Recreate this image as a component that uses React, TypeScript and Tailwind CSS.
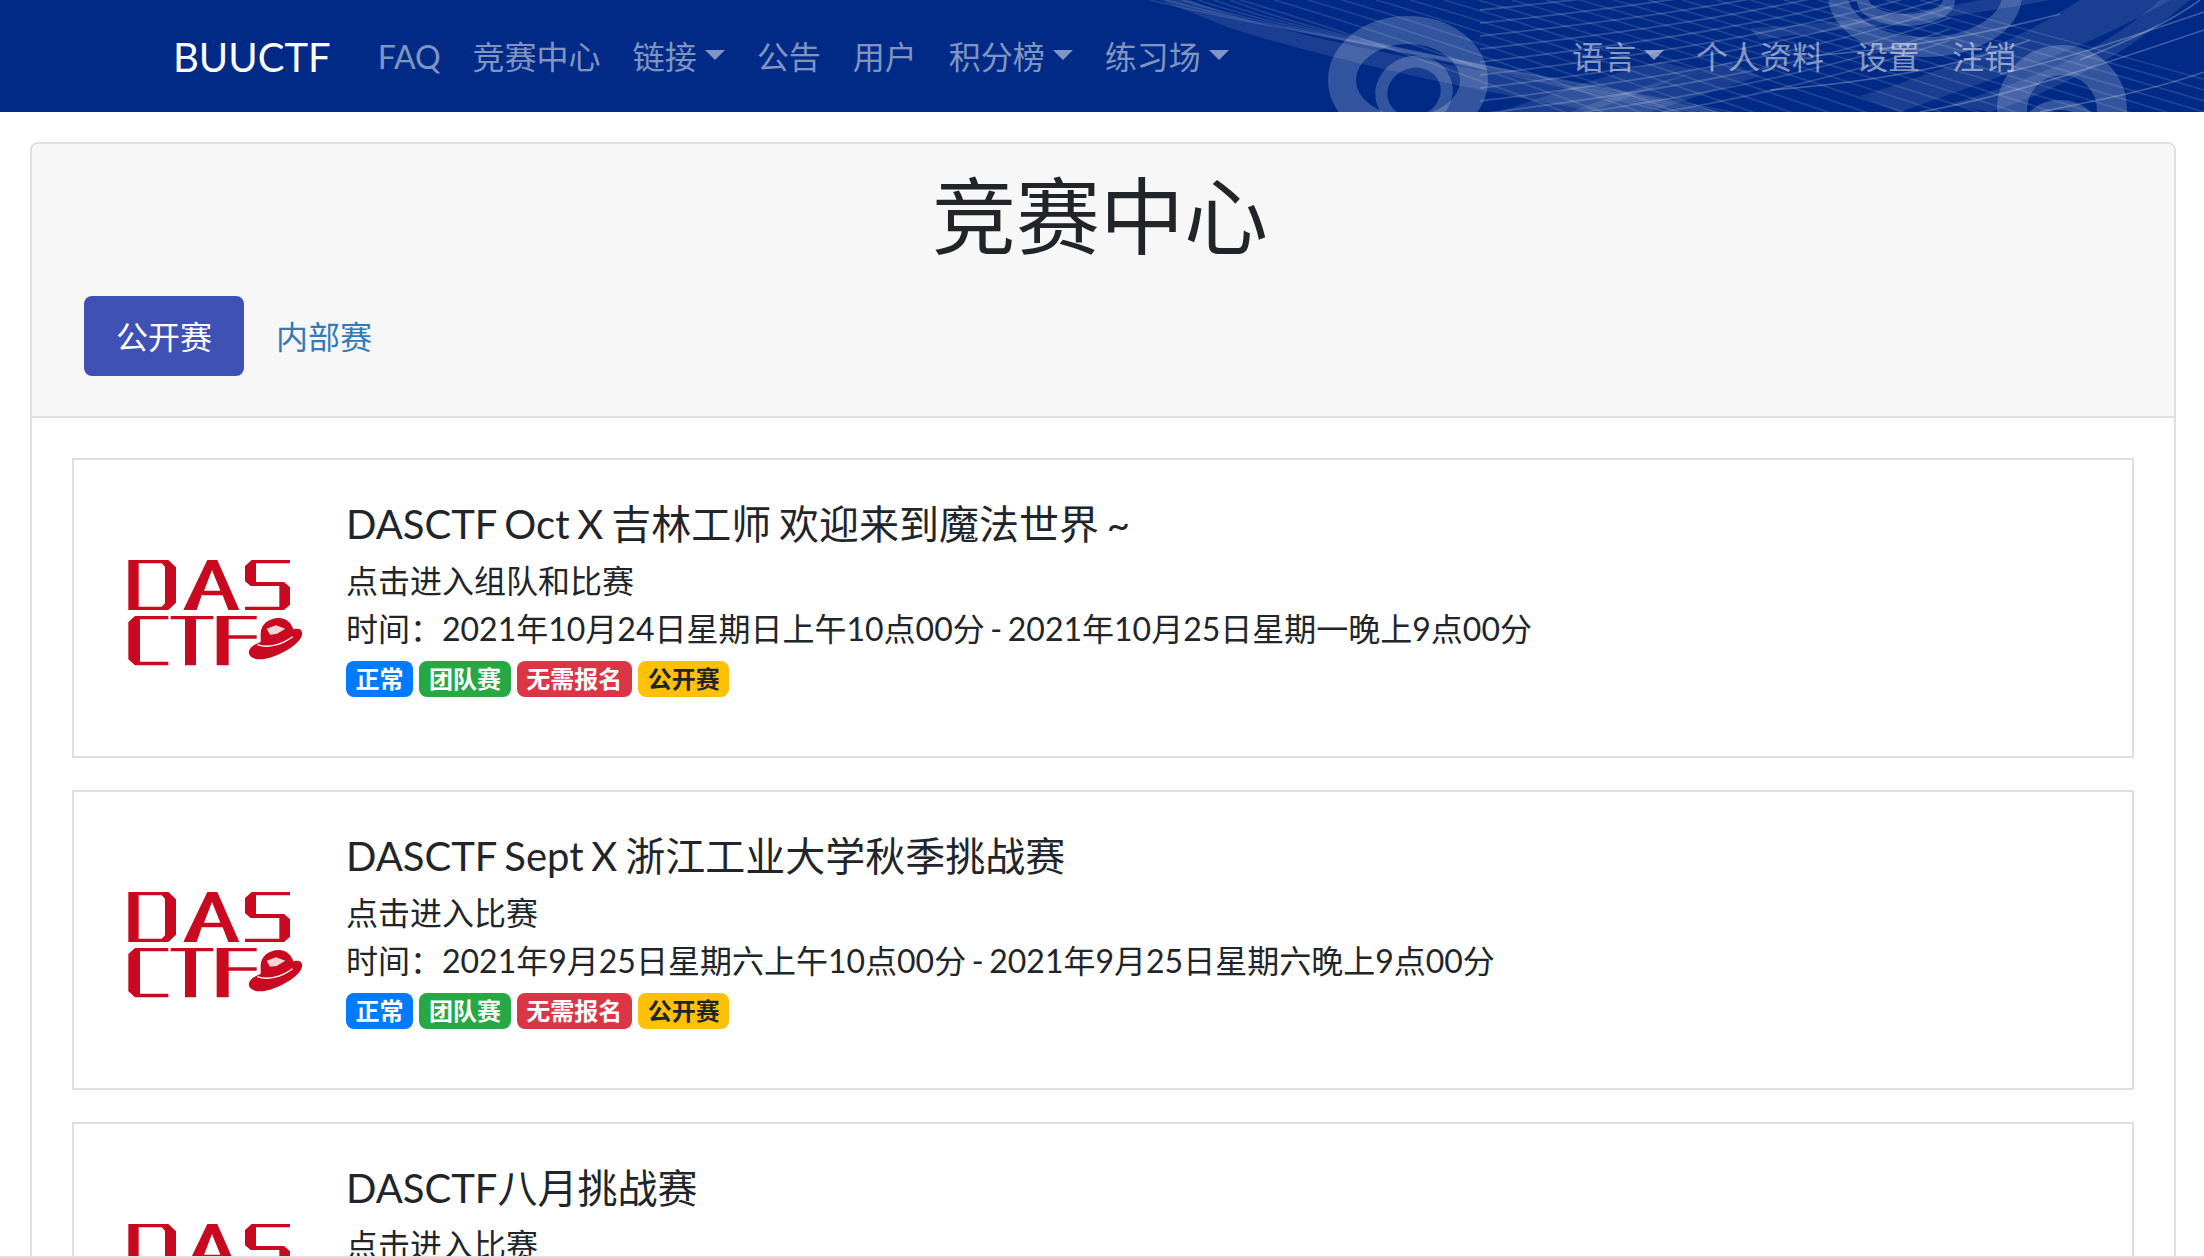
import React from 'react';

const leftLinks = [
    { label: 'FAQ' },
    { label: '竞赛中心' },
    { label: '链接', caret: true },
    { label: '公告' },
    { label: '用户' },
    { label: '积分榜', caret: true },
    { label: '练习场', caret: true },
];

const rightLinks = [
    { label: '语言', caret: true },
    { label: '个人资料' },
    { label: '设置' },
    { label: '注销' },
];

function NavLink({ label, caret }: { label: string; caret?: boolean }) {
    return (
        <a className="flex items-center px-4 text-[32px] leading-[48px] text-white/50">
            {label}
            {caret && (
                <span className="ml-2 mb-1 w-0 h-0 border-x-[10px] border-t-[10px] border-x-transparent border-t-white/50" />
            )}
        </a>
    );
}

// the swirl picture behind the navbar
function NavPattern() {
    const fanLines = Array.from({ length: 21 }, (_, i) => i);
    const steepLines = Array.from({ length: 6 }, (_, i) => i);
    const riseLines = Array.from({ length: 11 }, (_, i) => i);
    return (
        <svg className="absolute inset-0 w-full h-full" viewBox="0 0 2204 112" preserveAspectRatio="none" fill="none">
            {/* wide bands */}
            <g fill="#fff" fillOpacity="0.1">
                <path d="M1190 0 C1290 40 1480 72 1640 96 L1720 112 L1600 112 C1480 92 1330 60 1230 28 L1160 0Z" />
                <path d="M1500 112 C1560 90 1610 74 1660 62 L1700 70 L1590 112Z" />
                <path d="M1570 112 C1620 92 1680 76 1730 62 L1760 76 L1650 112Z" />
                <path d="M1900 112 C1990 80 2090 48 2170 0 L2080 0 C2020 40 1940 72 1860 96Z" />
                <path d="M1990 112 C2070 86 2130 50 2190 0 L2160 0 C2110 46 2040 78 1950 104Z" />
                <path d="M1760 40 C1830 30 1950 20 2050 0 L1980 0 C1900 16 1820 24 1750 28Z" />
            </g>
            {/* fan of thin lines running down to the right */}
            <g stroke="#fff" strokeOpacity="0.13" strokeWidth="1.6">
                {steepLines.map((i) => (
                    <path
                        key={i}
                        d={`M${1150 + i * 16} 0 C${1260 + i * 16} ${28 + i * 3} ${1400 + i * 16} ${44 + i * 4} ${1720 + i * 16} 125`}
                    />
                ))}
                {fanLines.map((i) => (
                    <path
                        key={i}
                        d={`M${1240 + i * 34} 0 C${1330 + i * 34} 26 ${1430 + i * 36} 62 ${1600 + i * 38} 125`}
                    />
                ))}
            </g>
            {/* cross lines rising to the right */}
            <g stroke="#fff" strokeOpacity="0.18" strokeWidth="1.8">
                {riseLines.map((i) => (
                    <path
                        key={i}
                        d={`M1480 ${10 + i * 13} C1620 ${-4 + i * 12.5} 1790 ${-24 + i * 12} 1950 ${-70 + i * 11}`}
                    />
                ))}
            </g>
            {/* rings */}
            <g stroke="#fff" strokeOpacity="0.2">
                <ellipse cx="1408" cy="80" rx="66" ry="50" strokeWidth="28" />
                <ellipse cx="1414" cy="92" rx="33" ry="30" strokeWidth="12" transform="rotate(-20 1414 92)" />
                <ellipse cx="1925" cy="-5" rx="87" ry="52" strokeWidth="20" />
                <ellipse cx="1906" cy="0" rx="43" ry="20" strokeWidth="12" />
                <ellipse cx="2062" cy="110" rx="50" ry="50" strokeWidth="30" />
                <ellipse cx="2060" cy="135" rx="36" ry="30" strokeWidth="10" />
            </g>
            {/* thin bright lines on the right */}
            <g stroke="#fff" strokeOpacity="0.25" strokeWidth="1.6">
                <path d="M1920 112 C2010 96 2110 62 2204 30" />
                <path d="M2000 74 C2070 58 2140 34 2204 12" />
                <path d="M2040 112 C2100 100 2160 88 2204 72" />
                <path d="M2080 60 C2130 40 2170 22 2200 0" />
                <path d="M1810 56 C1890 50 1970 38 2060 14" />
                <path d="M1770 90 C1850 84 1950 70 2030 40" />
            </g>
        </svg>
    );
}

function DasLogo() {
    return (
        <svg width="240" height="180" viewBox="0 0 720 540" className="shrink-0 blur-[0.7px]">
            <g fill="#c9091f">
                {/* D */}
                <path d="M85 120H205L228 142V248L205 270H85ZM116 130V260H185L195 250V140L185 130Z" fillRule="evenodd" />
                {/* A */}
                <path d="M322 120H352L418 270H385L368 226H305L290 270H250ZM336 150L312 212H361Z" fillRule="evenodd" />
                {/* S */}
                <path d="M455 120H570V130H468V186H552L570 202V254L552 270H435V260H538V198H452L435 184V138Z" />
                {/* C */}
                <path d="M105 288H205V298H120V425H205V436H105L85 418V306Z" />
                {/* T */}
                <path d="M212 288H340V298H288V436H255V298H212Z" />
                {/* F */}
                <path d="M350 288H470V298H386V346H470V356H386V436H350Z" />
                {/* hat */}
                <path d="M482 340C482 312 510 292 540 294C562 296 575 312 580 328C596 324 608 328 606 344C602 372 530 416 480 418C454 418 442 404 448 390C454 378 470 370 482 366Z" />
            </g>
            <path d="M472 374C505 386 545 374 578 350" stroke="#fff" strokeWidth="4" fill="none" />
            <path d="M500 326L528 316L556 326L530 342L510 344Z" fill="#f6d5d5" />
        </svg>
    );
}

function Badge({ className, children }: { className: string; children: React.ReactNode }) {
    return (
        <span className={`inline-block px-[9.6px] py-[6px] rounded-lg text-[24px] leading-[24px] font-bold ${className}`}>
            {children}
        </span>
    );
}

function ChallengeCard({ title, hint, time }: { title: string; hint: string; time?: string }) {
    return (
        <div className="h-[300px] mb-8 border-2 border-[#dfdfdf] flex pl-[26px] pt-[60px] overflow-hidden">
            <DasLogo />
            <div className="ml-[6px] -mt-5">
                <h3 className="text-[40px] leading-[48px] mb-[9px] text-[#212529] [word-spacing:-2.4px]">{title}</h3>
                <p className="text-[32px] leading-[48px] text-[#212529]">{hint}</p>
                {time && <p className="text-[32px] leading-[48px] text-[#212529] [word-spacing:-2.6px]">{time}</p>}
                {time && (
                    <div className="flex gap-[6.2px] mt-2">
                        <Badge className="bg-[#007bff] text-white">正常</Badge>
                        <Badge className="bg-[#28a745] text-white">团队赛</Badge>
                        <Badge className="bg-[#dc3545] text-white">无需报名</Badge>
                        <Badge className="bg-[#ffc107] text-[#212529]">公开赛</Badge>
                    </div>
                )}
            </div>
        </div>
    );
}

export default function App() {
    return (
        <div className="h-screen flex flex-col overflow-hidden bg-white [font-family:Lato,'Noto_Sans_CJK_SC',sans-serif]">
            {/* Navbar */}
            <nav className="relative h-[112px] shrink-0 bg-[#012a86] overflow-hidden">
                <NavPattern />
                <div className="relative h-full flex items-center pl-[173px] pr-[172px] pt-[2px]">
                    <a className="text-[40px] leading-[60px] text-white mr-8">BUUCTF</a>
                    <div className="flex -ml-[1px]">
                        {leftLinks.map((l) => (
                            <NavLink key={l.label} {...l} />
                        ))}
                    </div>
                    <div className="flex ml-auto">
                        {rightLinks.map((l) => (
                            <NavLink key={l.label} {...l} />
                        ))}
                    </div>
                </div>
            </nav>

            {/* Page */}
            <main className="flex-1 min-h-0 overflow-hidden pt-[30px] pl-[30px] pr-[28px]">
                <div className="border-2 border-[#dfdfdf] rounded-lg">
                    <div className="h-[274px] bg-[#f7f7f7] border-b-2 border-[#dfdfdf] rounded-t-md pt-[22px]">
                        <h1 className="text-[84px] leading-[100px] text-center text-[#212529] pr-[6px]">竞赛中心</h1>
                        <div className="flex mt-[30px] ml-[52px] text-[32px] leading-[48px]">
                            <a className="px-8 pt-[17px] pb-[15px] rounded-lg bg-[#4051b5] text-white">公开赛</a>
                            <a className="px-8 pt-[17px] pb-[15px] text-[#337ab7]">内部赛</a>
                        </div>
                    </div>
                    <div className="pt-10 px-10">
                        <ChallengeCard
                            title="DASCTF Oct X 吉林工师 欢迎来到魔法世界 ~"
                            hint="点击进入组队和比赛"
                            time="时间：2021年10月24日星期日上午10点00分 - 2021年10月25日星期一晚上9点00分"
                        />
                        <ChallengeCard
                            title="DASCTF Sept X 浙江工业大学秋季挑战赛"
                            hint="点击进入比赛"
                            time="时间：2021年9月25日星期六上午10点00分 - 2021年9月25日星期六晚上9点00分"
                        />
                        <ChallengeCard title="DASCTF八月挑战赛" hint="点击进入比赛" />
                    </div>
                </div>
            </main>
            <div className="h-[2px] shrink-0 bg-[#dfdfdf]" />
        </div>
    );
}
